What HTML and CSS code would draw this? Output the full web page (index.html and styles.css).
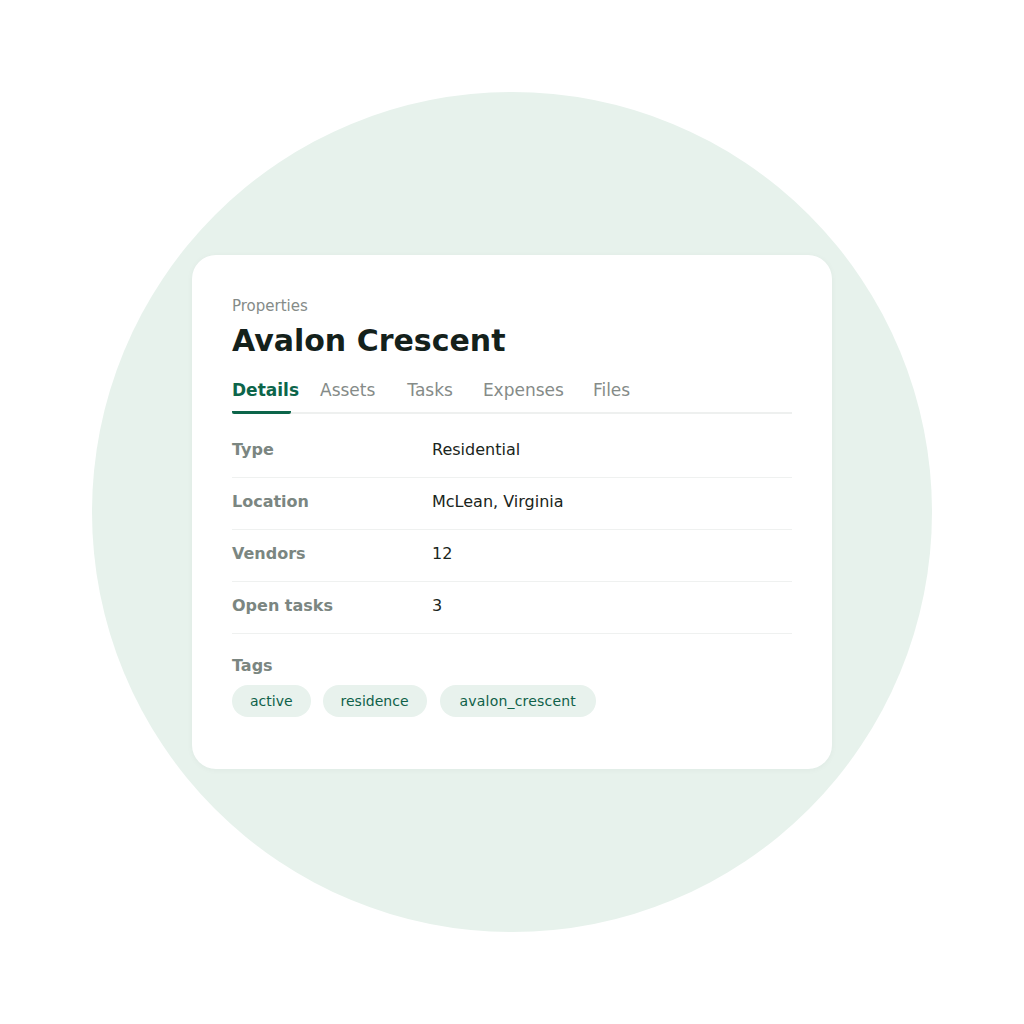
FILE: index.html
```html
<!DOCTYPE html>
<html lang="en">
<head>
<meta charset="utf-8">
<title>Avalon Crescent</title>
<link rel="stylesheet" href="styles.css">
</head>
<body>
<main class="stage">
  <div class="circle">
    <section class="card">
      <div class="eyebrow">Properties</div>
      <h1 class="title">Avalon Crescent</h1>
      <nav class="tabs">
        <span class="tab tab-active">Details</span>
        <span class="tab tab-assets">Assets</span>
        <span class="tab tab-tasks">Tasks</span>
        <span class="tab tab-expenses">Expenses</span>
        <span class="tab tab-files">Files</span>
      </nav>
      <dl class="details">
        <div class="row"><dt>Type</dt><dd>Residential</dd></div>
        <div class="row"><dt>Location</dt><dd>McLean, Virginia</dd></div>
        <div class="row"><dt>Vendors</dt><dd>12</dd></div>
        <div class="row"><dt>Open tasks</dt><dd>3</dd></div>
      </dl>
      <div class="tags-label">Tags</div>
      <div class="tags">
        <span class="tag">active</span>
        <span class="tag">residence</span>
        <span class="tag tag-wide">avalon_crescent</span>
      </div>
    </section>
  </div>
</main>
</body>
</html>
```
FILE: styles.css
```css
* { box-sizing: border-box; }
html, body {
  margin: 0;
  padding: 0;
  background: #ffffff;
  font-family: "DejaVu Sans", "Liberation Sans", sans-serif;
}
.stage {
  width: 1024px;
  height: 1024px;
  display: flex;
  align-items: center;
  justify-content: center;
}
.circle {
  width: 840px;
  height: 840px;
  border-radius: 50%;
  background: #e7f2ec;
  display: flex;
  align-items: center;
  justify-content: center;
}
.card {
  width: 640px;
  height: 514px;
  background: #ffffff;
  border-radius: 24px;
  padding: 41px 40px 0;
  box-shadow: 0 1px 6px rgba(20, 60, 40, 0.04);
}
.eyebrow {
  font-size: 15px;
  line-height: 20px;
  color: #858b88;
}
.title {
  margin: 6px 0 0;
  font-size: 30px;
  line-height: 38px;
  font-weight: 700;
  color: #14211b;
}
.tabs {
  display: flex;
  margin-top: 12px;
  border-bottom: 2px solid #eef0ef;
  height: 42px;
}
.tab {
  font-size: 17px;
  line-height: 24px;
  color: #858b88;
  padding-top: 6px;
  white-space: nowrap;
}
.tab-active {
  width: 59px;
  color: #0c654a;
  font-weight: 700;
  border-bottom: 3px solid #0c654a;
  margin-bottom: -2px;
  border-radius: 2px;
}
.tab-assets { margin-left: 29px; }
.tab-tasks { margin-left: 32px; }
.tab-expenses { margin-left: 30px; }
.tab-files { margin-left: 29px; }
.details {
  margin: 12px 0 0;
}
.row {
  display: flex;
  height: 52px;
  align-items: center;
  padding-bottom: 4px;
  border-bottom: 1px solid #eff1f0;
  font-size: 16px;
}
.row dt {
  width: 200px;
  font-weight: 700;
  color: #7b8681;
}
.row dd {
  margin: 0;
  color: #1a2520;
}
.tags-label {
  margin-top: 20px;
  font-size: 16px;
  line-height: 24px;
  font-weight: 700;
  color: #7b8681;
}
.tags {
  display: flex;
  gap: 12px;
  margin-top: 7px;
}
.tag {
  height: 32px;
  line-height: 32px;
  padding: 0 18px;
  border-radius: 16px;
  background: #e8f2ed;
  color: #0f6149;
  font-size: 14px;
}
.tag-wide {
  margin-left: 1px;
  padding: 0 20px;
  letter-spacing: 0.2px;
}
```
